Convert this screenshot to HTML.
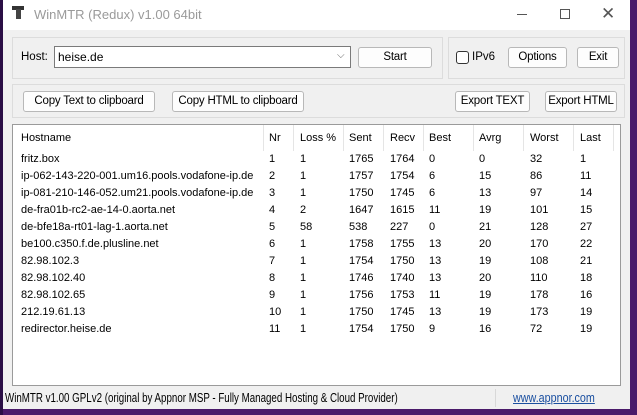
<!DOCTYPE html>
<html><head><meta charset="utf-8"><style>
*{margin:0;padding:0;box-sizing:border-box}
body{width:637px;height:415px;overflow:hidden;background:#4a1a6a;font-family:"Liberation Sans",sans-serif;font-size:11.5px;color:#000;position:relative}
.win{position:absolute;left:3px;top:0;width:627px;height:409px;background:#f0f0f0;overflow:hidden}
.title{position:absolute;left:0;top:0;width:627px;height:30px;background:#fff}
.abs{position:absolute;white-space:nowrap}
.grp{position:absolute;border:1px solid #dcdcdc}
.btn{position:absolute;border:1px solid #b8b8b8;background:#fdfdfd;border-radius:3px;text-align:center;line-height:19px;white-space:nowrap;font-size:11.5px;letter-spacing:-0.2px}
.tbl{position:absolute;left:9px;top:124px;width:609px;height:262px;background:#fff;border:1px solid #9a9a9a;font-size:11px}
.hd{position:absolute;top:0;height:26px;line-height:26px}
.sep{position:absolute;top:0;width:1px;height:26px;background:#e5e5e5}
.r{position:absolute;height:17px;line-height:17px;white-space:nowrap}
</style></head><body>
<div class="win">
<div class="title">
<div class="abs" style="left:9px;top:6px;width:12px;height:4px;background:#333"></div>
<div class="abs" style="left:13px;top:9px;width:5px;height:10px;background:#444"></div>
<div class="abs" style="left:31px;top:7px;font-size:13px;color:#9a9a9a">WinMTR (Redux) v1.00 64bit</div>
<div class="abs" style="left:514px;top:14px;width:10px;height:1px;background:#555"></div>
<div class="abs" style="left:557px;top:9px;width:10px;height:10px;border:1px solid #555"></div>
<div class="abs" style="left:598px;top:4px;font-size:17px;color:#555">✕</div>
</div>
<div class="grp" style="left:9px;top:37px;width:431px;height:42px"></div>
<div class="abs" style="left:18px;top:51px">Host:</div>
<div class="abs" style="left:51px;top:46px;width:297px;height:22px;background:#fff;border:1px solid #7a7a7a;padding:3px 3px;font-size:12px">heise.de</div>
<div class="abs" style="left:334px;top:50px;color:#666;font-size:10px">⌵</div>
<div class="btn" style="left:355px;top:47px;width:74px;height:21px">Start</div>
<div class="grp" style="left:445px;top:37px;width:177px;height:42px"></div>
<div class="abs" style="left:453px;top:51px;width:13px;height:13px;border:1px solid #333;border-radius:3px;background:#fff"></div>
<div class="abs" style="left:469px;top:51px">IPv6</div>
<div class="btn" style="left:505px;top:47px;width:59px;height:21px">Options</div>
<div class="btn" style="left:574px;top:47px;width:42px;height:21px">Exit</div>
<div class="grp" style="left:9px;top:84px;width:613px;height:34px"></div>
<div class="btn" style="left:20px;top:91px;width:132px;height:21px">Copy Text to clipboard</div>
<div class="btn" style="left:169px;top:91px;width:132px;height:21px">Copy HTML to clipboard</div>
<div class="btn" style="left:452px;top:91px;width:75px;height:21px">Export TEXT</div>
<div class="btn" style="left:542px;top:91px;width:72px;height:21px">Export HTML</div>
<div class="tbl">
<div class="hd" style="left:8px">Hostname</div><div class="sep" style="left:250px"></div>
<div class="hd" style="left:256px">Nr</div><div class="sep" style="left:280px"></div>
<div class="hd" style="left:287px">Loss %</div><div class="sep" style="left:330px"></div>
<div class="hd" style="left:336px">Sent</div><div class="sep" style="left:370px"></div>
<div class="hd" style="left:377px">Recv</div><div class="sep" style="left:410px"></div>
<div class="hd" style="left:416px">Best</div><div class="sep" style="left:460px"></div>
<div class="hd" style="left:466px">Avrg</div><div class="sep" style="left:510px"></div>
<div class="hd" style="left:517px">Worst</div><div class="sep" style="left:560px"></div>
<div class="hd" style="left:567px">Last</div><div class="sep" style="left:600px"></div>
<div id="rows"></div>
</div>
<div class="abs" style="left:0;top:386px;width:627px;height:23px;background:#f0f0f0"></div>
<div class="abs" style="left:2px;top:390px;font-size:13px;transform:scaleX(0.75);transform-origin:0 0">WinMTR v1.00 GPLv2 (original by Appnor MSP - Fully Managed Hosting &amp; Cloud Provider)</div>
<div class="abs" style="left:492px;top:389px;width:1px;height:18px;background:#d8d8d8"></div>
<div class="abs" style="left:510px;top:391px;color:#1a4fa0;text-decoration:underline;font-size:12.5px;transform:scaleX(0.86);transform-origin:0 0">www.appnor.com</div>
</div>
<div style="position:absolute;left:0;top:0;width:3px;height:415px;background:#2a0e45"></div>
<script>
var d=[["fritz.box",1,1,1765,1764,0,0,32,1],["ip-062-143-220-001.um16.pools.vodafone-ip.de",2,1,1757,1754,6,15,86,11],["ip-081-210-146-052.um21.pools.vodafone-ip.de",3,1,1750,1745,6,13,97,14],["de-fra01b-rc2-ae-14-0.aorta.net",4,2,1647,1615,11,19,101,15],["de-bfe18a-rt01-lag-1.aorta.net",5,58,538,227,0,21,128,27],["be100.c350.f.de.plusline.net",6,1,1758,1755,13,20,170,22],["82.98.102.3",7,1,1754,1750,13,19,108,21],["82.98.102.40",8,1,1746,1740,13,20,110,18],["82.98.102.65",9,1,1756,1753,11,19,178,16],["212.19.61.13",10,1,1750,1745,13,19,173,19],["redirector.heise.de",11,1,1754,1750,9,16,72,19]];
var x=[8,256,287,336,377,416,466,517,567],h="";
d.forEach(function(r,i){r.forEach(function(v,j){h+='<div class="r" style="left:'+x[j]+'px;top:'+(26+i*17)+'px">'+v+'</div>'})});
document.getElementById("rows").innerHTML=h;
</script>
</body></html>
